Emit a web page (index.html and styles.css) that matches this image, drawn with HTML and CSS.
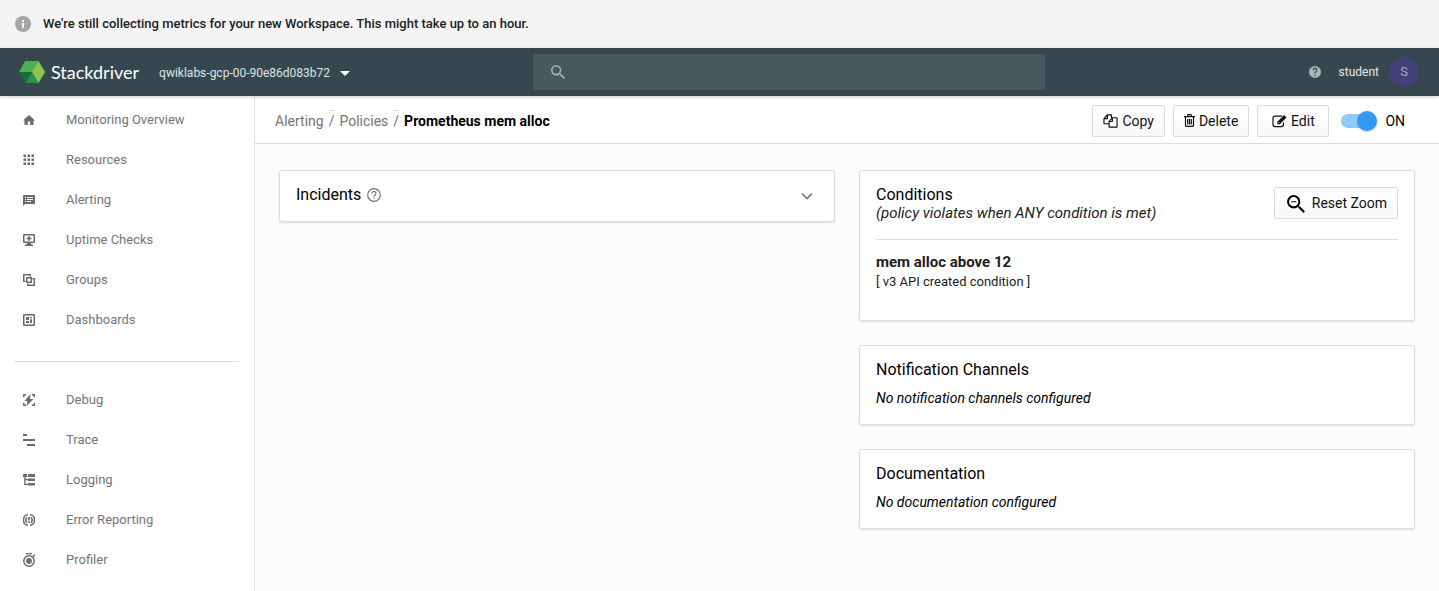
FILE: index.html
```html
<!DOCTYPE html>
<html lang="en">
<head>
<meta charset="utf-8">
<meta name="viewport" content="width=device-width, initial-scale=1">
<title>Prometheus mem alloc - Stackdriver</title>
<link rel="stylesheet" href="styles.css">
</head>
<body>
<div class="banner" role="status">
  <svg class="banner-icon" viewBox="0 0 16 16" aria-hidden="true"><circle cx="8" cy="8" r="8" fill="#a6a6a6"/><path d="M7 4h2v2H7zM7 7h2v5H7z" fill="#f4f4f4"/></svg>
  <p class="banner-text">We're still collecting metrics for your new Workspace. This might take up to an hour.</p>
</div>
<header class="topbar">
  <div class="topbar-left">
    <a class="brand" href="#">
      <svg class="brand-mark" viewBox="0 0 26 22" aria-hidden="true"><path d="M6 0h14l-7 11H0z" fill="#4caf50"/><path d="M0 11h13L6.500 22z" fill="#1b6b3a"/><path d="M13 11l6.500 11h-13z" fill="#26924a"/><path d="M19.500 0L26 11l-6.500 11L13 11z" fill="#8fc34d"/></svg>
      <span class="brand-name">Stackdriver</span>
    </a>
    <div class="project">
      <select class="project-select" aria-label="Workspace"><option>qwiklabs-gcp-00-90e86d083b72</option></select>
      <svg class="project-arrow" viewBox="0 0 10 5" aria-hidden="true"><path d="M0 0h10L5 5z" fill="#fff"/></svg>
    </div>
  </div>
  <div class="search">
    <svg class="search-icon" viewBox="3 3 17.500 17.500" aria-hidden="true"><path fill="#a9b1b4" d="M15.500 14h-.79l-.28-.27A6.471 6.471 0 0 0 16 9.500 6.500 6.500 0 1 0 9.500 16c1.610 0 3.090-.59 4.230-1.570l.27.28v.79l5 4.990L20.490 19l-4.990-5zm-6 0a4.500 4.500 0 1 1 0-9 4.500 4.500 0 0 1 0 9z"/></svg>
    <input class="search-input" type="text" aria-label="Search">
  </div>
  <div class="topbar-right">
    <button class="help" type="button" aria-label="Help"><svg class="icon" viewBox="2 2 20 20" aria-hidden="true"><path fill="#aeb5b8" d="M12 2a10 10 0 1 0 0 20 10 10 0 0 0 0-20zm1 17h-2v-2h2v2zm2.070-7.750-.9.920C13.450 12.900 13 13.500 13 15h-2v-.5c0-1.100.45-2.100 1.170-2.830l1.240-1.260A2 2 0 1 0 10 9H8a4 4 0 1 1 7.070 2.250z"/></svg></button>
    <span class="user-name">student</span>
    <span class="avatar">S</span>
  </div>
</header>
<div class="shell">
  <nav class="sidebar" aria-label="Main">
    <a class="nav-item" href="#"><svg class="icon" viewBox="0 0 12 12" aria-hidden="true"><path d="M6 1l6 5.500h-1.500V11H7.200V7.500H4.800V11H1.500V6.500H0z"/></svg>Monitoring Overview</a>
    <a class="nav-item" href="#"><svg class="icon" viewBox="0 0 12 12" aria-hidden="true"><path d="M.5 .5h2.500v2.500H.5zM4.500 .5h2.500v2.500H4.500zM8.500 .5h2.500v2.500H8.500zM.5 4.500h2.500v2.500H.5zM4.500 4.500h2.500v2.500H4.500zM8.500 4.500h2.500v2.500H8.500zM.5 8.500h2.500v2.500H.5zM4.500 8.500h2.500v2.500H4.500zM8.500 8.500h2.500v2.500H8.500z"/></svg>Resources</a>
    <a class="nav-item" href="#"><svg class="icon" viewBox="0 0 12 12" aria-hidden="true"><path fill-rule="evenodd" d="M1 1h10a1 1 0 0 1 1 1v7a1 1 0 0 1-1 1H2l-2 2V2a1 1 0 0 1 1-1zm1 2v1h1V3zm0 2v1h1V5zm0 2v1h1V7zm2-4v1h6V3zm0 2v1h6V5zm0 2v1h4V7z"/></svg>Alerting</a>
    <a class="nav-item" href="#"><svg class="icon" viewBox="0 0 12 12" aria-hidden="true"><path fill-rule="evenodd" d="M1 0h10a1 1 0 0 1 1 1v7a1 1 0 0 1-1 1H8v1.500h2V12H2v-1.500h2V9H1a1 1 0 0 1-1-1V1a1 1 0 0 1 1-1zm.5 1.500v6h9v-6z"/><path d="M5.200 2.300h1.600v1.400h1.700v1.500H6.800v1.500H5.200V5.200H3.500V3.700h1.700z"/></svg>Uptime Checks</a>
    <a class="nav-item" href="#"><svg class="icon" viewBox="0 0 12 12" aria-hidden="true"><path fill-rule="evenodd" d="M0 0h8v2.500H6.500v-1h-5v5h1V8H0zM3 3h6v6H3zm1.500 1.500v3h3v-3zM9.500 4H12v8H4V9.500h1.500v1h5v-5h-1z"/></svg>Groups</a>
    <a class="nav-item" href="#"><svg class="icon" viewBox="0 0 12 12" aria-hidden="true"><path fill-rule="evenodd" d="M1 0h10a1 1 0 0 1 1 1v10a1 1 0 0 1-1 1H1a1 1 0 0 1-1-1V1a1 1 0 0 1 1-1zm.5 1.500v9h9v-9z"/><path d="M3 3h3v3H3zM7 3h2v1.300H7zM3 7h3v2H3zM7 5.300h2V9H7z"/></svg>Dashboards</a>
    <hr class="nav-rule">
    <a class="nav-item" href="#"><svg class="icon" viewBox="0 0 12 12" aria-hidden="true"><path d="M0 0h3v1.500H1.500V3H0zM9 0h3v3h-1.500V1.500H9zM0 9h1.500v1.500H3V12H0zM10.500 9H12v3H9v-1.500h1.500zM7.500 0L1.500 7h3l-1 5 7-7H7z"/></svg>Debug</a>
    <a class="nav-item" href="#"><svg class="icon" viewBox="0 0 12 12" aria-hidden="true"><path d="M0 0h4v2H0zM0 5h12v2H0zM4 10h8v2H4z"/></svg>Trace</a>
    <a class="nav-item" href="#"><svg class="icon" viewBox="0 0 12 12" aria-hidden="true"><path d="M0 0h4v3H2.500v2H5v1.300H2.500v3.500H5V11H1.200V3H0zM5 0h7v3H5zM5 4.500h7v2.500H5zM5 9h7v2.500H5z"/></svg>Logging</a>
    <a class="nav-item" href="#"><svg class="icon" viewBox="0 0 12 12" aria-hidden="true"><path d="M5 .8C-1 .8-1 11.200 5 11.200M7 .8c6 0 6 10.400 0 10.400M4.200 3.400c-1.800 1.200-1.800 4 0 5.200M7.800 3.400c1.800 1.200 1.800 4 0 5.200" fill="none" stroke="#6b6b6b" stroke-width="1.600"/><path d="M5.200 3h1.600v3.500H5.200zM5.200 7.300h1.600V9H5.200z"/></svg>Error Reporting</a>
    <a class="nav-item" href="#"><svg class="icon icon-tall" viewBox="0 0 12 14" aria-hidden="true"><path d="M3 0h6v1.300H3z"/><circle cx="6" cy="8" r="5.200" fill="none" stroke="#6b6b6b" stroke-width="1.500"/><circle cx="6" cy="8" r="2.900"/><path d="M9.500 3.800L11.800 2" stroke="#6b6b6b" stroke-width="1.600"/></svg>Profiler</a>
  </nav>
  <main class="main">
    <div class="toolbar">
      <nav class="crumbs" aria-label="Breadcrumb">
        <a class="crumb" href="#">Alerting</a><span class="crumb-sep">/</span><a class="crumb" href="#">Policies</a><span class="crumb-sep">/</span><h1 class="crumb-current">Prometheus mem alloc</h1>
      </nav>
      <div class="actions">
        <button class="btn" type="button"><svg class="btn-icon" viewBox="0 0 15 15" aria-hidden="true"><path fill="none" stroke="#111" stroke-width="1.200" stroke-linejoin="round" d="M5.500 10.500h-5V5L4 1h4.500v3M4.200 1v4H.6M6 8l3.500-4h5v10H6zM9.500 4v4H6"/></svg>Copy</button>
        <button class="btn" type="button"><svg class="btn-icon btn-icon-sm" viewBox="0 0 11 13" aria-hidden="true"><path fill="none" stroke="#111" stroke-width="1.200" d="M0 2.600h11M3.500 2.500l.5-1.900h3l.5 1.900M1.500 3v8.400q0 1 1 1h6q1 0 1-1V3M3.700 5v5.500M5.500 5v5.500M7.300 5v5.500"/></svg>Delete</button>
        <button class="btn" type="button"><svg class="btn-icon" viewBox="0 0 15 13" aria-hidden="true"><path fill="none" stroke="#111" stroke-width="1.200" d="M10 1.600H3Q1 1.600 1 3.600v6.500q0 2 2 2h6.500q2 0 2-2V8"/><path fill="#111" fill-rule="evenodd" d="M12 .5l2.500 2.500-6.700 6.700H5.300V7.200zM6.500 7.500v1h1v-.6z"/></svg>Edit</button>
        <label class="switch"><input class="switch-input" type="checkbox" role="switch" checked><span class="switch-track"></span><span>ON</span></label>
      </div>
    </div>
    <div class="content">
      <div class="column">
        <section class="card incidents">
          <h2 class="card-title">Incidents</h2>
          <svg class="hint" viewBox="0 0 14 14" aria-hidden="true"><circle cx="7" cy="7" r="6.300" fill="none" stroke="#757575" stroke-width="1.200"/><path d="M5 5.600a2 2 0 1 1 3.300 1.400Q7 7.900 7 8.800" fill="none" stroke="#757575" stroke-width="1.200"/><path d="M6.400 9.700h1.200v1.200H6.400z" fill="#757575"/></svg>
          <button class="expand" type="button" aria-label="Expand incidents"><svg class="chevron" viewBox="0 0 12 8" aria-hidden="true"><path d="M1 1.500l5 5 5-5" fill="none" stroke="#757575" stroke-width="1.600"/></svg></button>
        </section>
      </div>
      <div class="column">
        <section class="card conditions">
          <div class="conditions-head">
            <div>
              <h2 class="card-title">Conditions</h2>
              <p class="subtitle">(policy violates when ANY condition is met)</p>
            </div>
            <button class="btn btn-zoom" type="button"><svg class="zoom-icon" viewBox="3 1 17.500 19.500" aria-hidden="true"><path fill="#000" d="M15.500 14h-.79l-.28-.27A6.471 6.471 0 0 0 16 9.500 6.500 6.500 0 1 0 9.500 16c1.610 0 3.090-.59 4.230-1.570l.27.28v.79l5 4.990L20.490 19l-4.990-5zm-6 0a4.500 4.500 0 1 1 0-9 4.500 4.500 0 0 1 0 9zM7 9h5v1H7z"/></svg>Reset Zoom</button>
          </div>
          <h3 class="condition-name">mem alloc above 12</h3>
          <p class="condition-note">[ v3 API created condition ]</p>
        </section>
        <section class="card">
          <h2 class="card-title">Notification Channels</h2>
          <p class="empty">No notification channels configured</p>
        </section>
        <section class="card">
          <h2 class="card-title">Documentation</h2>
          <p class="empty">No documentation configured</p>
        </section>
      </div>
    </div>
  </main>
</div>
</body>
</html>
```
FILE: styles.css
```css
* { box-sizing: border-box; }
body {
  display: flex;
  flex-direction: column;
  min-height: 100vh;
  margin: 0;
  background: #fff;
  color: #000;
  font: 14px/20px Roboto, "Liberation Sans", sans-serif;
}
h1, h2, h3, p { margin: 0; }
a { text-decoration: none; }
button, select, input { font: inherit; }
svg { display: block; flex: none; }
.icon { width: 12px; height: 12px; }

.banner {
  display: flex;
  align-items: center;
  gap: 12px;
  min-height: 48px;
  padding: 0 15px;
  background: #f4f4f4;
}
.banner-icon { width: 16px; height: 16px; }
.banner-text { color: #212121; font-size: 13px; font-weight: 500; }

.topbar {
  position: relative;
  display: grid;
  grid-template-columns: 533fr 512fr 394fr;
  align-items: center;
  min-height: 48px;
  background: #37474f;
  box-shadow: 0 1px 3px rgba(0, 0, 0, 0.2);
}
.topbar-left { display: flex; align-items: center; gap: 20px; padding-left: 19px; }
.brand { display: flex; align-items: center; gap: 6px; color: #fff; }
.brand-mark { width: 26px; height: 22px; }
.brand-name { font-family: Lato, sans-serif; font-size: 18px; line-height: 24px; }
.project { position: relative; }
.project-select {
  appearance: none;
  padding: 0 20px 0 0;
  border: 0;
  background: transparent;
  color: #dfe3e5;
  font-size: 12px;
  line-height: 20px;
}
.project-select option { color: #000; }
.project-arrow { position: absolute; top: 9px; right: 0; width: 10px; height: 5px; pointer-events: none; }
.search {
  display: flex;
  align-items: center;
  gap: 12px;
  height: 36px;
  padding: 0 18px;
  border-radius: 2px;
  background: #49575e;
}
.search-icon { width: 14px; height: 14px; }
.search-input { flex: 1; min-width: 0; padding: 0; border: 0; outline: 0; background: transparent; color: #fff; }
.topbar-right { display: flex; align-items: center; justify-content: flex-end; padding-right: 20px; color: #e4e7e9; font-size: 12px; }
.help { margin-right: 18px; padding: 0; border: 0; background: transparent; }
.user-name { margin-right: 10px; }
.avatar {
  display: grid;
  place-items: center;
  width: 30px;
  height: 30px;
  border-radius: 50%;
  background: #453f78;
  color: #a5a2bd;
  font-size: 13px;
}

.shell { display: flex; flex: 1; }
.sidebar { flex: none; width: 255px; padding-top: 4px; border-right: 1px solid #e0e0e0; background: #fff; }
.nav-item {
  display: flex;
  align-items: center;
  gap: 31px;
  height: 40px;
  padding-left: 23px;
  color: #757575;
  font-size: 13px;
  fill: #6b6b6b;
}
.icon-tall { height: 14px; }
.nav-rule { height: 1px; margin: 21px 15px 18px 14px; border: 0; background: #dcdcdc; }

.main { flex: 1; min-width: 0; background: #fcfcfc; }
.toolbar {
  display: flex;
  align-items: center;
  justify-content: space-between;
  min-height: 48px;
  padding: 2px 34px 0 20px;
  border-bottom: 1px solid #dcdcdc;
  background: #fff;
}
.crumbs { display: flex; align-items: center; }
.crumb, .crumb-sep { color: #757575; }
.crumb-sep { position: relative; padding: 0 5px; }
.crumb-sep::before { content: ""; position: absolute; top: -1px; left: 5px; width: 6px; height: 1px; background: #d8d8d8; }
.crumb-current { font-size: 14px; font-weight: 700; line-height: 20px; }
.actions { display: flex; align-items: center; gap: 8px; }
.btn {
  display: flex;
  align-items: center;
  justify-content: center;
  gap: 4px;
  min-width: 72px;
  height: 32px;
  padding: 0 10px;
  border: 1px solid #dcdcdc;
  border-radius: 2px;
  background: linear-gradient(#fff, #f8f8f8);
  color: #111;
  font-size: 14px;
}
.btn-icon { width: 15px; height: 14px; }
.btn-icon-sm { width: 11px; height: 13px; }
.switch { display: flex; align-items: center; gap: 8px; margin-left: 4px; }
.switch-input { position: absolute; opacity: 0; }
.switch-track { position: relative; width: 36px; height: 14px; border-radius: 7px; background: #90caf9; }
.switch-track::after {
  content: "";
  position: absolute;
  top: -3px;
  right: 0;
  width: 20px;
  height: 20px;
  border-radius: 50%;
  background: #3399f0;
  box-shadow: 0 1px 2px rgba(0, 0, 0, 0.2);
}

.content { display: grid; grid-template-columns: 1fr 1fr; gap: 24px; padding: 26px 24px; }
.column { display: flex; flex-direction: column; gap: 24px; min-width: 0; }
.card {
  padding: 14px 16px 16px;
  border: 1px solid #dcdcdc;
  border-radius: 3px;
  background: #fff;
  box-shadow: 0 1px 2px rgba(0, 0, 0, 0.12);
}
.card-title { font-size: 16px; font-weight: 400; line-height: 20px; }
.incidents { display: flex; align-items: center; gap: 6px; }
.hint { width: 14px; height: 14px; }
.expand { margin-left: auto; padding: 2px 5px 0; border: 0; background: transparent; }
.chevron { width: 12px; height: 8px; }
.conditions { padding-bottom: 28px; }
.conditions-head {
  display: flex;
  align-items: flex-start;
  justify-content: space-between;
  margin-bottom: 12px;
  padding-bottom: 18px;
  border-bottom: 1px solid #dcdcdc;
}
.subtitle { color: #212121; font-size: 15px; font-style: italic; line-height: 16px; }
.btn-zoom { gap: 7px; margin-top: 2px; padding: 0 10px 0 12px; }
.zoom-icon { width: 18px; height: 20px; }
.condition-name { color: #212121; font-size: 15px; font-weight: 700; }
.condition-note { color: #212121; font-size: 13px; }
.empty { margin-top: 8px; font-style: italic; }
```
